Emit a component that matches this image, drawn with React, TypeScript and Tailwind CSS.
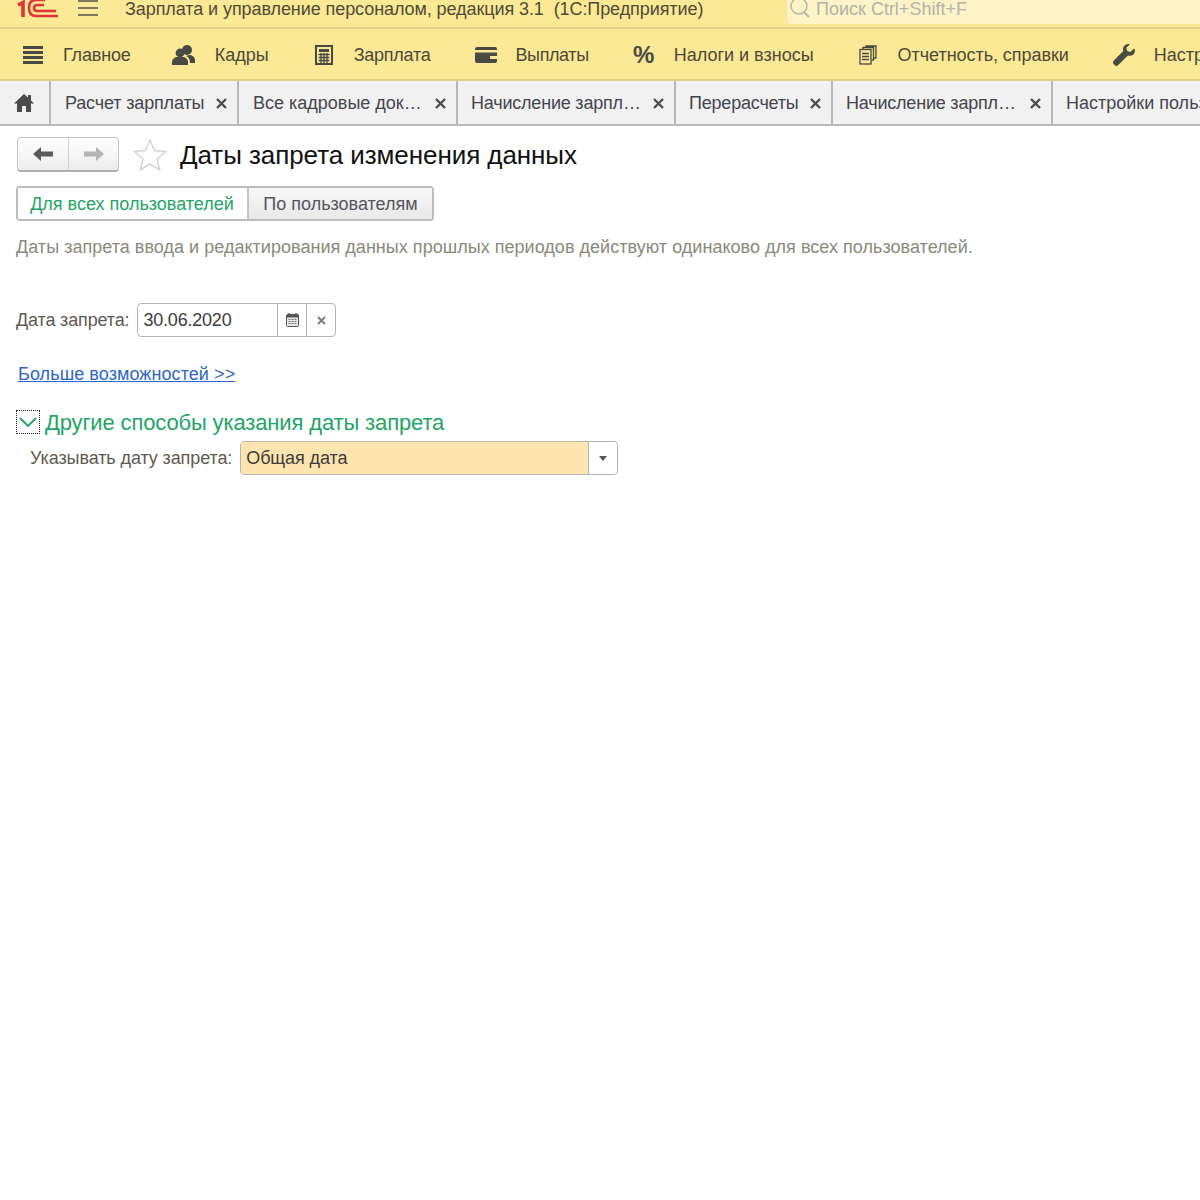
import { ReactNode } from 'react';

const font = { fontFamily: '"Liberation Sans", Arial, sans-serif' };

function MenuIcon({ name }: { name: string }) {
    switch (name) {
        case 'main':
            return (
                <svg width="22" height="20" viewBox="0 0 22 20" fill="#4a4a44">
                    <rect x="1" y="1" width="20" height="3" />
                    <rect x="1" y="6" width="20" height="3" />
                    <rect x="1" y="11" width="20" height="3" />
                    <rect x="1" y="16" width="20" height="3" />
                </svg>
            );
        case 'staff':
            return (
                <svg width="24" height="22" viewBox="0 0 24 22" fill="#4a4a44">
                    <circle cx="15" cy="6" r="5" />
                    <path d="M17 11c3 0 6 2 6 5v3h-5c0-3-1-6-4-7z" />
                    <circle cx="8" cy="9" r="4.4" />
                    <path d="M0 21v-3c0-3 3-5 5-5h6c2 0 5 2 5 5v3z" />
                </svg>
            );
        case 'calc':
            return (
                <svg width="18" height="20" viewBox="0 0 18 20">
                    <rect x="1" y="1" width="16" height="18" fill="none" stroke="#4a4a44" strokeWidth="2" />
                    <rect x="4" y="4" width="10" height="3" fill="#4a4a44" />
                    <path d="M3.5 9.5h11M3.5 12.5h11M3.5 15.5h11M6 8v10M9 8v10M12 8v10" stroke="#4a4a44" strokeWidth="1.4" />
                </svg>
            );
        case 'wallet':
            return (
                <svg width="22" height="16" viewBox="0 0 22 16" fill="#4a4a44">
                    <path d="M2 0h18a2 2 0 0 1 2 2v1H0V2a2 2 0 0 1 2-2z" />
                    <path d="M0 5.5h22V14a2 2 0 0 1-2 2H2a2 2 0 0 1-2-2zM15 9v3h7V9z" />
                </svg>
            );
        case 'percent':
            return (
                <span className="text-[24px] font-bold leading-none text-[#4a4a44]">%</span>
            );
        case 'reports':
            return (
                <svg width="18" height="20" viewBox="0 0 18 20" fill="none" stroke="#4a4a44" strokeWidth="1.3">
                    <rect x="1" y="4.5" width="11" height="14.5" />
                    <path d="M4 4V2.5h10.5V15H12.5M7 2V1h10v12h-2.5" />
                    <path d="M3 8.5h7M3 11.5h7M3 14.5h7" />
                </svg>
            );
        default:
            return (
                <svg width="22" height="22" viewBox="0 0 22 22" fill="#4a4a44">
                    <path d="M21 4.500l-3.600 3.400-3.200-.9-.9-3.200L16.900.3c-2.600-.8-5.700.5-6.600 3.200-.4 1.200-.4 2.400 0 3.500L.9 16.600a2.600 2.600 0 0 0 0 3.700l.7.7a2.600 2.600 0 0 0 3.700 0l9.600-9.500c3.700 1.200 7.400-1.600 7-5.400-.1-.6-.4-1.200-.9-1.600z" />
                </svg>
            );
    }
}

interface MenuItemProps {
    icon: string;
    label: string;
    iconBox: string;
    gap: string;
    tracking?: string;
}

function MenuItem({ icon, label, iconBox, gap, tracking = '' }: MenuItemProps) {
    return (
        <div className={`flex shrink-0 items-center ${gap}`}>
            <div className={`flex items-center justify-center ${iconBox}`}>
                <MenuIcon name={icon} />
            </div>
            <span className={`whitespace-nowrap text-[#4c4a3a] ${tracking}`}>{label}</span>
        </div>
    );
}

interface TabProps {
    label: string;
    width: string;
    close?: boolean;
    pad?: string;
    tracking?: string;
}

function Tab({ label, width, close = true, pad = 'pl-[14px]', tracking = '' }: TabProps) {
    return (
        <div className={`flex h-full shrink-0 items-center justify-between border-r-2 border-[#b8b8b8] pr-[10px] pt-[1px] ${pad} ${width}`}>
            <span className={`whitespace-nowrap text-[#45454f] ${tracking}`}>{label}</span>
            {close && (
                <svg width="11" height="11" viewBox="0 0 11 11" stroke="#4d4d4d" strokeWidth="2.4">
                    <path d="M1 1l9 9M10 1l-9 9" />
                </svg>
            )}
        </div>
    );
}

function Bordered({ className, children }: { className: string; children: ReactNode }) {
    return <div className={`flex rounded-[4px] border border-[#b5b5b5] ${className}`}>{children}</div>;
}

export default function App() {
    return (
        <div className="flex h-[1200px] w-[1200px] flex-col overflow-hidden bg-white text-[18px]" style={font}>
            {/* title bar, cut off by the top of the picture */}
            <div className="flex h-[29px] shrink-0 items-start border-b-2 border-[#e0cf85] bg-[#fbe995]">
                <svg width="44" height="20" viewBox="0 0 44 20" className="ml-[17px] shrink-0" fill="none" stroke="#e0343a">
                    <path d="M1 5l5-2.500V17" strokeWidth="3.600" />
                    <path d="M28 0H19Q12 0 12 8Q12 16 19 16H41" strokeWidth="2.500" />
                    <path d="M27 5H20Q17 5 17 8Q17 11 20 11H39" strokeWidth="2.500" />
                </svg>
                <svg width="20" height="18" viewBox="0 0 20 18" className="ml-[17px] shrink-0" stroke="#55524a" strokeWidth="1.5">
                    <path d="M0 1h20M0 8h20M0 15h20" />
                </svg>
                <span className="ml-[27px] mt-[-4px] w-[662px] shrink-0 whitespace-pre tracking-[-0.08px] text-[#4f4b36]">Зарплата и управление персоналом, редакция 3.1  (1С:Предприятие)</span>
                <div className="flex h-[24px] flex-1 items-start rounded-bl-[4px] bg-[#fdf3c7] pl-[2px]">
                    <svg width="22" height="22" viewBox="0 0 22 22" fill="none" stroke="#bdbaa8" strokeWidth="1.6" className="mt-[-3px]">
                        <circle cx="10" cy="9" r="8" />
                        <path d="M15 15l5 5" strokeWidth="2.200" />
                    </svg>
                    <span className="ml-[5px] mt-[-4px] text-[#b5b3a3]">Поиск Ctrl+Shift+F</span>
                </div>
            </div>

            {/* sections menu */}
            <div className="flex h-[52px] shrink-0 items-center border-b-2 border-[#e0cf85] bg-[#fbe995] pl-[22px] pt-[2px]">
                <MenuItem icon="main" label="Главное" iconBox="w-[22px]" gap="gap-[19px]" tracking="tracking-[-0.15px]" />
                <div className="w-[41px] shrink-0" />
                <MenuItem icon="staff" label="Кадры" iconBox="w-[24px]" gap="gap-[19px]" />
                <div className="w-[46px] shrink-0" />
                <MenuItem icon="calc" label="Зарплата" iconBox="w-[18px]" gap="gap-[21px]" tracking="tracking-[-0.25px]" />
                <div className="w-[44px] shrink-0" />
                <MenuItem icon="wallet" label="Выплаты" iconBox="w-[22px]" gap="gap-[19px]" tracking="tracking-[-0.4px]" />
                <div className="w-[44px] shrink-0" />
                <MenuItem icon="percent" label="Налоги и взносы" iconBox="w-[22px]" gap="gap-[19px]" />
                <div className="w-[45px] shrink-0" />
                <MenuItem icon="reports" label="Отчетность, справки" iconBox="w-[18px]" gap="gap-[21px]" tracking="tracking-[-0.05px]" />
                <div className="w-[44px] shrink-0" />
                <MenuItem icon="settings" label="Настройки" iconBox="w-[22px]" gap="gap-[19px]" />
            </div>

            {/* open tabs */}
            <div className="flex h-[45px] shrink-0 items-center border-b-2 border-[#b8b8b8] bg-[#f1f1f1]">
                <div className="flex h-full w-[51px] shrink-0 items-center justify-center border-r-2 border-[#b8b8b8] pr-[2px]">
                    <svg width="20" height="18" viewBox="0 0 20 18" fill="#4a4a4a">
                        <path d="M10 0L0 9.500h3V18h5v-6h4v6h5V9.500h3l-3-3V1h-3v2.500z" />
                    </svg>
                </div>
                <Tab label="Расчет зарплаты" width="w-[188px]" tracking="tracking-[-0.15px]" />
                <Tab label="Все кадровые док…" width="w-[219px]" />
                <Tab label="Начисление зарпл…" width="w-[218px]" pad="pl-[13px]" tracking="tracking-[-0.2px]" />
                <Tab label="Перерасчеты" width="w-[157px]" pad="pl-[13px]" tracking="tracking-[-0.2px]" />
                <Tab label="Начисление зарпл…" width="w-[220px]" pad="pl-[13px]" tracking="tracking-[-0.2px]" />
                <Tab label="Настройки пользователей" width="w-[240px]" close={false} pad="pl-[13px]" />
            </div>

            {/* form */}
            <div className="flex flex-col pl-[16px]">
                <div className="mt-[11px] flex h-[35px] items-center">
                    <div className="ml-[1px] flex h-[35px] w-[102px] rounded-[4px] border border-[#c4c4c4] border-b-2 border-b-[#b0b0b0] bg-gradient-to-b from-white to-[#ececec]">
                        <div className="flex w-[51px] items-center justify-center border-r border-[#d0d0d0]">
                            <svg width="20" height="14" viewBox="0 0 20 14" fill="#5a5a5a">
                                <path d="M0 7l8-7v4.500h12v5H8V14z" />
                            </svg>
                        </div>
                        <div className="flex flex-1 items-center justify-center">
                            <svg width="20" height="14" viewBox="0 0 20 14" fill="#b5b5b5">
                                <path d="M20 7l-8-7v4.500H0v5h12V14z" />
                            </svg>
                        </div>
                    </div>
                    <svg width="34" height="33" viewBox="0 0 34 33" className="ml-[14px]" fill="none" stroke="#d4d4d4" strokeWidth="1.5">
                        <path d="M17 2l4.500 10.500 11 1-8.500 7.500 2.700 11L17 26l-9.700 6L10 21l-8.500-7.500 11-1z" />
                    </svg>
                    <h1 className="ml-[13px] whitespace-nowrap pt-[2px] text-[26px] font-normal tracking-[-0.07px] text-[#111]">Даты запрета изменения данных</h1>
                </div>

                <div className="mt-[14px] flex h-[35px] w-[418px] rounded-[4px] border-2 border-[#bcbcbc]">
                    <div className="flex w-[231px] items-center justify-center whitespace-nowrap border-r-2 border-[#c4c4c4] bg-white pr-[1px] pt-[1px] text-[#1fa565]">Для всех пользователей</div>
                    <div className="flex flex-1 items-center justify-center whitespace-nowrap bg-gradient-to-b from-[#f8f8f8] to-[#e8e8e8] pt-[1px] text-[#55555f]">По пользователям</div>
                </div>

                <p className="mt-[16px] h-[20px] whitespace-nowrap leading-[20px] tracking-[0.03px] text-[#8a8a7c]">Даты запрета ввода и редактирования данных прошлых периодов действуют одинаково для всех пользователей.</p>

                <div className="mt-[46px] flex h-[34px] items-center">
                    <span className="whitespace-nowrap tracking-[-0.15px] text-[#5f5a52]">Дата запрета:</span>
                    <Bordered className="ml-[8px] h-[34px] w-[199px]">
                        <div className="flex w-[139px] items-center pl-[5px] tracking-[-0.2px] text-[#3c3c3c]">30.06.2020</div>
                        <div className="flex w-[29px] items-center justify-center border-l border-[#b5b5b5]">
                            <svg width="13" height="14" viewBox="0 0 13 14">
                                <rect x="0.500" y="1.500" width="12" height="12" rx="1" fill="#e8e8e8" stroke="#555" />
                                <rect x="0.500" y="1.500" width="12" height="3" fill="#555" />
                                <path d="M3 0v3M10 0v3" stroke="#555" strokeWidth="1.400" />
                                <path d="M2.500 6.500h2M5.500 6.500h2M8.500 6.500h2M2.500 8.500h2M5.500 8.500h2M8.500 8.500h2M2.500 10.500h2M5.500 10.500h2M8.500 10.500h2" stroke="#777" />
                            </svg>
                        </div>
                        <div className="flex flex-1 items-center justify-center border-l border-[#b5b5b5]">
                            <svg width="9" height="9" viewBox="0 0 9 9" stroke="#777" strokeWidth="1.800">
                                <path d="M1 1l7 7M8 1l-7 7" />
                            </svg>
                        </div>
                    </Bordered>
                </div>

                <a className="ml-[2px] mt-[26px] h-[22px] whitespace-nowrap leading-[22px] tracking-[0.08px] text-[#2d66c4] underline">Больше возможностей &gt;&gt;</a>

                <div className="mt-[25px] flex h-[24px] items-center">
                    <div className="flex h-[24px] w-[24px] items-center justify-center border border-dotted border-[#222]">
                        <svg width="18" height="11" viewBox="0 0 18 11" fill="none" stroke="#1fa565" strokeWidth="1.900">
                            <path d="M1 1l8 8 8-8" />
                        </svg>
                    </div>
                    <span className="ml-[5px] whitespace-nowrap text-[22px] tracking-[-0.14px] text-[#1fa565]">Другие способы указания даты запрета</span>
                </div>

                <div className="ml-[14px] mt-[7px] flex h-[34px] items-center">
                    <span className="whitespace-nowrap tracking-[-0.1px] text-[#5f5a52]">Указывать дату запрета:</span>
                    <Bordered className="ml-[8px] h-[34px] w-[378px]">
                        <div className="flex flex-1 items-center rounded-l-[3px] bg-[#fee4ae] pl-[5px] tracking-[-0.1px] text-[#3c3c3c]">Общая дата</div>
                        <div className="flex w-[29px] items-center justify-center border-l border-[#b5b5b5]">
                            <svg width="8" height="5" viewBox="0 0 8 5" fill="#555">
                                <path d="M0 0h8L4 5z" />
                            </svg>
                        </div>
                    </Bordered>
                </div>
            </div>
        </div>
    );
}
